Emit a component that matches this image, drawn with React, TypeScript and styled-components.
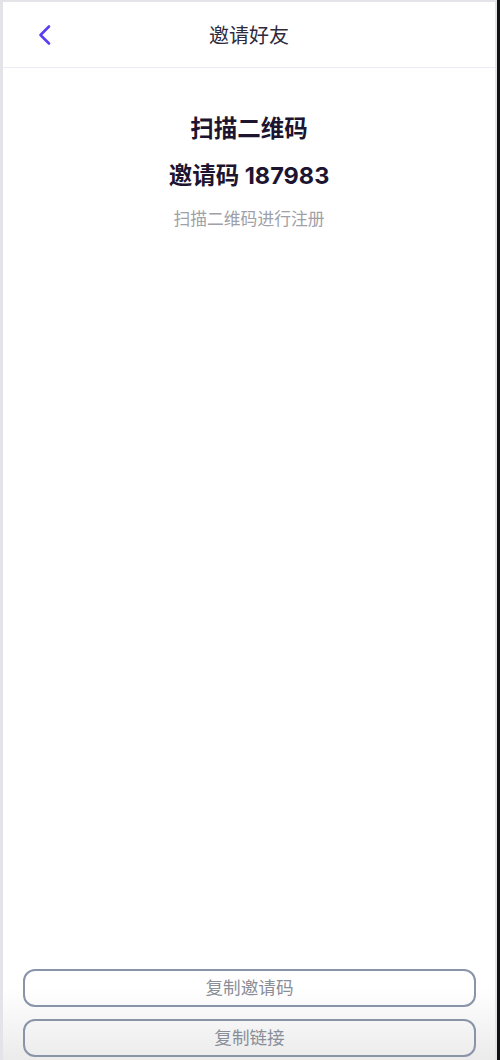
import React from 'react';
import styled, { createGlobalStyle } from 'styled-components';

const GlobalStyle = createGlobalStyle`
    html, body {
        margin: 0;
        padding: 0;
        background: #111111;
    }
    body {
        font-family: Inter, 'Noto Sans CJK SC', sans-serif;
    }
    * {
        box-sizing: border-box;
    }
`;

const Shell = styled.div`
    width: 500px;
    height: 1060px;
    padding-right: 3px;
    background: #111111;
`;

const Phone = styled.div`
    height: 100%;
    display: flex;
    flex-direction: column;
    background: #ffffff;
    border-left: 3px solid #e4e4e8;
    border-top: 2px solid #e4e4e8;
    border-right: 2px solid #e4e4e8;
`;

const Header = styled.header`
    position: relative;
    height: 66px;
    flex-shrink: 0;
    display: flex;
    align-items: center;
    justify-content: center;
    border-bottom: 1px solid #ecebf3;
`;

const BackButton = styled.button`
    position: absolute;
    left: 30px;
    top: 50%;
    transform: translateY(-50%);
    display: flex;
    padding: 0;
    border: none;
    background: none;
    color: #5a3ef0;
    cursor: pointer;
`;

const HeaderTitle = styled.h1`
    margin: 0;
    font-family: 'Noto Sans CJK SC', sans-serif;
    font-size: 20px;
    font-weight: 400;
    color: #2f2b3d;
`;

const Body = styled.main`
    flex: 1;
    display: flex;
    flex-direction: column;
    align-items: center;
    padding-top: 45px;
`;

const Heading = styled.h2<{ $gap?: number }>`
    margin: ${(p) => p.$gap ?? 0}px 0 0;
    font-family: Inter, 'Noto Sans CJK SC', sans-serif;
    font-size: 23.5px;
    line-height: 32px;
    font-weight: 700;
    color: #1d1530;
`;

const Hint = styled.p`
    margin: 14px 0 0;
    font-family: 'Noto Sans CJK SC', sans-serif;
    font-size: 16.8px;
    line-height: 24px;
    color: #a0a0a8;
`;

const Footer = styled.footer`
    display: flex;
    flex-direction: column;
    gap: 12px;
    padding: 20px 19px 3px 20px;
    background: linear-gradient(#ffffff 0%, #ffffff 35%, #ebebeb 100%);
`;

const OutlineButton = styled.button`
    height: 38px;
    width: 100%;
    padding: 0 0 3px;
    border: 2px solid #8a94a8;
    border-radius: 12px;
    background: transparent;
    font-family: 'Noto Sans CJK SC', sans-serif;
    font-size: 17.6px;
    color: #8a8e98;
    cursor: pointer;
`;

export default function App() {
    return (
        <Shell>
            <GlobalStyle />
            <Phone>
                <Header>
                    <BackButton aria-label="返回">
                        <svg width="24" height="24" viewBox="0 0 24 24" fill="none">
                            <path
                                d="M16 3.5 L7.5 12 L16 20.5"
                                stroke="currentColor"
                                strokeWidth="2.6"
                                strokeLinecap="round"
                                strokeLinejoin="round"
                            />
                        </svg>
                    </BackButton>
                    <HeaderTitle>邀请好友</HeaderTitle>
                </Header>
                <Body>
                    <Heading>扫描二维码</Heading>
                    <Heading $gap={15}>邀请码 187983</Heading>
                    <Hint>扫描二维码进行注册</Hint>
                </Body>
                <Footer>
                    <OutlineButton>复制邀请码</OutlineButton>
                    <OutlineButton>复制链接</OutlineButton>
                </Footer>
            </Phone>
        </Shell>
    );
}
